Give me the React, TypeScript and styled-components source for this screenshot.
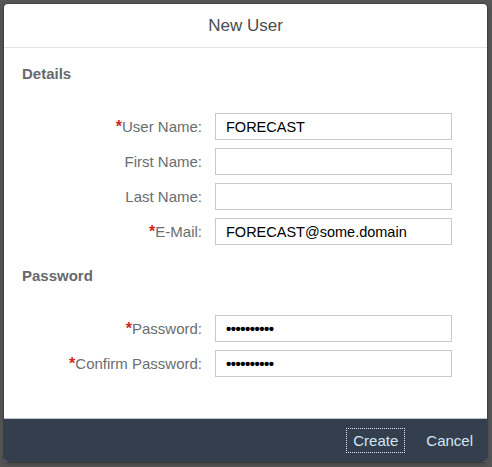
import React from "react";
import styled, { createGlobalStyle } from "styled-components";

const Global = createGlobalStyle`
  html, body { margin: 0; padding: 0; }
  body {
    background: #575757;
    font-family: "Liberation Sans", Arial, sans-serif;
    width: 492px;
    height: 467px;
    overflow: hidden;
  }
`;

const Backdrop = styled.div`
  width: 492px;
  height: 467px;
  padding: 4px 5px 5px 4px;
  box-sizing: border-box;
`;

const Dialog = styled.div`
  width: 483px;
  height: 458px;
  display: flex;
  flex-direction: column;
  background: #fff;
  border-radius: 4px;
  overflow: hidden;
  box-shadow: 0 0 0 1px rgba(0, 0, 0, 0.15), 0 2px 6px rgba(0, 0, 0, 0.3);
`;

const Header = styled.header`
  height: 43px;
  flex: none;
  display: flex;
  align-items: center;
  justify-content: center;
  border-bottom: 1px solid #e5e5e5;
  font-size: 17px;
  color: #4a4d50;
`;

const Body = styled.div`
  flex: 1;
  padding: 17px 35px 0 18px;
  display: flex;
  flex-direction: column;
`;

const SectionTitle = styled.div<{ $top: number }>`
  margin-top: ${(p) => p.$top}px;
  font-size: 15px;
  font-weight: bold;
  line-height: 18px;
  color: #666a6e;
`;

const Form = styled.div`
  margin-top: 30px;
  display: grid;
  grid-template-columns: 180px 237px;
  column-gap: 13px;
  row-gap: 8px;
  align-items: center;
`;

const Label = styled.div`
  text-align: right;
  font-size: 15px;
  color: #6a6d70;
  white-space: nowrap;
`;

const Req = styled.span`
  color: #d0271d;
  font-weight: bold;
  font-size: 16px;
`;

const Field = styled.div<{ $dots?: boolean }>`
  height: 27px;
  box-sizing: border-box;
  border: 1px solid #c7c9cc;
  padding: 0 10px;
  display: flex;
  align-items: center;
  font-size: ${(p) => (p.$dots ? "15px" : "14.5px")};
  font-weight: ${(p) => (p.$dots ? "bold" : "normal")};
  letter-spacing: ${(p) => (p.$dots ? "-0.5px" : "0")};
  color: #000;
`;

const Footer = styled.footer`
  height: 43px;
  flex: none;
  background: #333f4c;
  border-top: 1px solid #b8c4cf;
  display: flex;
  align-items: center;
  justify-content: flex-end;
  padding: 0 7px 0 0;
  gap: 14px;
`;

const Button = styled.button<{ $focused?: boolean }>`
  background: none;
  border: 1px dotted ${(p) => (p.$focused ? "#dbe8f5" : "transparent")};
  color: #d4e5f7;
  font-family: inherit;
  font-size: 15px;
  height: 25px;
  padding: 0 6px;
  cursor: pointer;
`;

type Row = { label: string; value?: string; required?: boolean; password?: boolean };

const details: Row[] = [
  { label: "User Name:", value: "FORECAST", required: true },
  { label: "First Name:" },
  { label: "Last Name:" },
  { label: "E-Mail:", value: "FORECAST@some.domain", required: true },
];

const passwords: Row[] = [
  { label: "Password:", value: "••••••••••", required: true, password: true },
  { label: "Confirm Password:", value: "••••••••••", required: true, password: true },
];

const Rows = ({ rows }: { rows: Row[] }) => (
  <Form>
    {rows.map((r) => (
      <React.Fragment key={r.label}>
        <Label>
          {r.required && <Req>*</Req>}
          {r.label}
        </Label>
        <Field $dots={r.password}>{r.value}</Field>
      </React.Fragment>
    ))}
  </Form>
);

export default function App() {
  return (
    <>
      <Global />
      <Backdrop>
        <Dialog>
          <Header>New User</Header>
          <Body>
            <SectionTitle $top={0}>Details</SectionTitle>
            <Rows rows={details} />
            <SectionTitle $top={22}>Password</SectionTitle>
            <Rows rows={passwords} />
          </Body>
          <Footer>
            <Button $focused>Create</Button>
            <Button>Cancel</Button>
          </Footer>
        </Dialog>
      </Backdrop>
    </>
  );
}
